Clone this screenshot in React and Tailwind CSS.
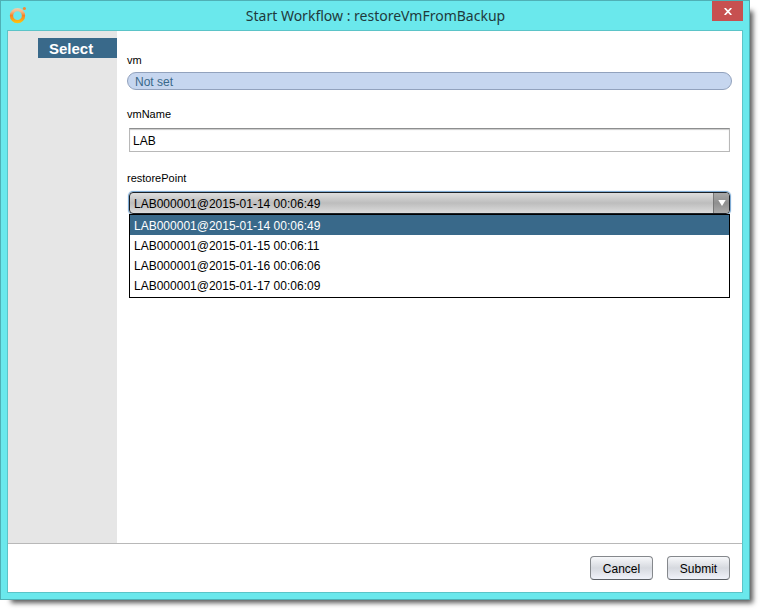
import React, { useState } from "react";

const POINTS = [
  "LAB000001@2015-01-14 00:06:49",
  "LAB000001@2015-01-15 00:06:11",
  "LAB000001@2015-01-16 00:06:06",
  "LAB000001@2015-01-17 00:06:09",
];

function OrchestratorIcon() {
  return (
    <svg width="18" height="18" viewBox="0 0 18 18" aria-hidden="true">
      <defs>
        <linearGradient id="ring" gradientUnits="userSpaceOnUse" x1="0" y1="2" x2="0" y2="17">
          <stop offset="0" stopColor="#e9d3b4" />
          <stop offset="0.25" stopColor="#f6b683" />
          <stop offset="0.5" stopColor="#f58426" />
          <stop offset="0.7" stopColor="#f99a1a" />
          <stop offset="1" stopColor="#fdc60c" />
        </linearGradient>
      </defs>
      <circle cx="8.5" cy="9.7" r="6" fill="none" stroke="url(#ring)" strokeWidth="3.3" />
      <circle cx="15.4" cy="2.5" r="1.6" fill="#f58a33" />
    </svg>
  );
}

function TitleBar() {
  return (
    <header className="flex h-[29px] items-start">
      <div className="w-[38px] pt-[5px] pl-2">
        <OrchestratorIcon />
      </div>
      <h1 className="flex-1 text-center font-['Noto_Sans',sans-serif] text-[14px] leading-[30px] text-[#1f3a3c]">
        Start Workflow : restoreVmFromBackup
      </h1>
      <button
        type="button"
        aria-label="Close"
        className="mr-[6px] flex h-5 w-[31px] items-center justify-center bg-[#c75050]"
      >
        <svg width="8" height="7" viewBox="0 0 8 7" aria-hidden="true">
          <path d="M0.7 0L7.3 7M7.3 0L0.7 7" stroke="#fff" strokeWidth="1.7" />
        </svg>
      </button>
    </header>
  );
}

function ActionButton({ children }) {
  return (
    <button
      type="button"
      className="h-6 w-[63px] rounded-[4px] border border-[#85888c] border-b-[#5c6066] bg-linear-to-b from-[#f7f8fa] via-[#d6d9df] to-[#f0f2fa] pt-[2px] text-[12px]"
    >
      {children}
    </button>
  );
}

function RestorePointSelect() {
  const [point, setPoint] = useState(POINTS[0]);
  return (
    <div className="relative mx-[2px] mt-[6px]">
      <select
        id="restorePoint"
        value={point}
        onChange={(e) => setPoint(e.target.value)}
        className="block h-[22px] w-full appearance-none rounded-[4px] border border-[#1c2126] bg-linear-to-b from-[#dedede] via-[#bdbdbd] to-[#dcdcdc] pt-px pl-1 text-[12px] shadow-[0_0_1px_1px_#73a4d1] outline-none"
      >
        {POINTS.map((p) => (
          <option key={p}>{p}</option>
        ))}
      </select>
      <span className="pointer-events-none absolute top-px right-px bottom-px flex w-4 items-center justify-center rounded-r-[3px] border-l border-[#777] bg-linear-to-b from-[#a8a8a8] via-[#8f8f8f] to-[#ababab]">
        <svg width="8" height="6" viewBox="0 0 8 6" aria-hidden="true">
          <path d="M0.3 0H7.7L4 6Z" fill="#fff" />
        </svg>
      </span>
      <ul
        role="listbox"
        aria-label="restorePoint"
        className="absolute inset-x-0 top-full z-10 border border-black bg-white pb-[2px] text-[12px] leading-[22px]"
      >
        {POINTS.map((p) => (
          <li
            key={p}
            role="option"
            aria-selected={p === point}
            onClick={() => setPoint(p)}
            className="h-5 pl-1 aria-selected:bg-[#39698a] aria-selected:text-white"
          >
            {p}
          </li>
        ))}
      </ul>
    </div>
  );
}

export default function App() {
  return (
    <div className="flex min-h-screen bg-white pr-[15px] pb-[15px] font-['Liberation_Sans',Arial,sans-serif] text-black">
      <div className="flex flex-1 flex-col border border-[#4fb0b5] bg-[#6ae8ec] shadow-[7px_7px_5px_-4px_rgba(0,0,0,0.65)]">
        <TitleBar />
        <div className="mx-[6px] mb-[6px] flex flex-1 flex-col border border-[#5bc4c8] bg-white">
          <div className="flex flex-1">
            <nav className="w-[109px] bg-[#e6e6e6] pt-[7px] pl-[30px]">
              <a
                href="#select"
                aria-current="step"
                className="block h-5 bg-[#39698a] pl-[11px] text-[15px] leading-[21px] font-bold text-white"
              >
                Select
              </a>
            </nav>
            <main className="flex-1 px-[10px] pt-[21px] text-[11px] leading-4">
              <label htmlFor="vm" className="block">
                vm
              </label>
              <input
                id="vm"
                readOnly
                defaultValue="Not set"
                className="mt-1 block h-[18px] w-full rounded-full border border-[#92a2bd] bg-[#c6d6ef] px-[7px] pt-[2px] text-[12px] text-[#39698a] outline-none"
              />
              <label htmlFor="vmName" className="mt-4 block">
                vmName
              </label>
              <div className="mx-[2px] mt-[6px]">
                <input
                  id="vmName"
                  defaultValue="LAB"
                  className="block h-6 w-full border border-[#b8b8b8] border-t-[#8d8e8f] bg-white px-[3px] pt-[2px] text-[12px] shadow-[inset_0_1px_1px_#c9c9c9] outline-none"
                />
              </div>
              <label htmlFor="restorePoint" className="mt-[18px] block">
                restorePoint
              </label>
              <RestorePointSelect />
            </main>
          </div>
          <footer className="flex h-[49px] items-center justify-end gap-[14px] border-t border-[#b8b8b8] px-3">
            <ActionButton>Cancel</ActionButton>
            <ActionButton>Submit</ActionButton>
          </footer>
        </div>
      </div>
    </div>
  );
}
